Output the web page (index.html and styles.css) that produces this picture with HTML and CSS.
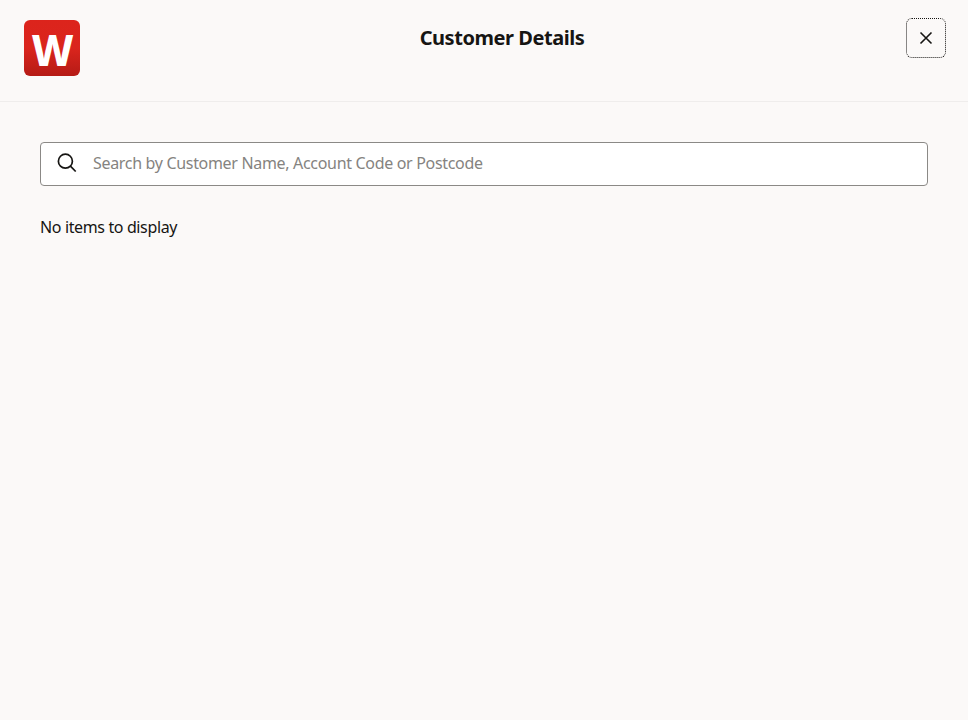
FILE: index.html
```html
<!DOCTYPE html>
<html lang="en">
<head>
<meta charset="utf-8">
<title>Customer Details</title>
<link rel="stylesheet" href="styles.css">
</head>
<body>
<header class="header">
  <div class="logo"><span class="logo-mark">W</span></div>
  <h1 class="title">Customer Details</h1>
  <button class="close" type="button" aria-label="Close">
    <svg viewBox="0 0 14 14"><path d="M1.5 1.5 12.5 12.5M12.5 1.5 1.5 12.5"/></svg>
  </button>
</header>
<main class="content">
  <label class="search">
    <svg class="search-icon" viewBox="0 0 20 20"><circle cx="8.4" cy="8.2" r="7"/><path d="M13.4 13.2 18.7 18.5"/></svg>
    <input class="search-input" type="text" placeholder="Search by Customer Name, Account Code or Postcode">
  </label>
  <p class="empty">No items to display</p>
</main>
</body>
</html>
```

FILE: styles.css
```css
* { box-sizing: border-box; }
body {
  margin: 0;
  min-height: 100vh;
  background: #fbf9f8;
  color: #161513;
  font: 16px/24px "Noto Sans", sans-serif;
}
.header {
  display: flex;
  align-items: flex-start;
  height: 102px;
  padding: 18px 22px 0 24px;
  border-bottom: 1px solid #efedec;
}
.logo {
  display: flex;
  justify-content: center;
  width: 56px;
  height: 56px;
  margin-top: 2px;
  border-radius: 6px;
  background: linear-gradient(#dc241c 0%, #da251d 50%, #b51b16 100%);
}
.logo-mark {
  color: #fff;
  font-size: 43px;
  font-weight: 800;
  line-height: 60px;
  transform: scaleX(0.97);
}
.title {
  flex: 1;
  margin: 6px 0 0;
  padding-left: 18px;
  text-align: center;
  font-size: 20px;
  line-height: 28px;
  font-weight: 700;
  letter-spacing: -0.45px;
}
.close {
  display: flex;
  align-items: center;
  justify-content: center;
  width: 40px;
  height: 40px;
  padding: 0;
  border: 1px dotted #161513;
  border-radius: 6px;
  background: transparent;
}
.close svg { width: 14px; height: 14px; fill: none; stroke: #161513; stroke-width: 1.6; }
.content { padding: 40px; }
.search {
  display: flex;
  align-items: center;
  height: 44px;
  padding: 0 16px;
  gap: 16px;
  border: 1px solid #8b8986;
  border-radius: 4px;
  background: #fff;
}
.search-icon {
  flex: none;
  width: 20px;
  height: 20px;
  margin-top: -2px;
  fill: none;
  stroke: #161513;
  stroke-width: 1.7;
}
.search-input {
  flex: 1;
  height: 24px;
  margin-bottom: 2px;
  padding: 0;
  border: 0;
  outline: 0;
  background: transparent;
  color: #161513;
  font: inherit;
  letter-spacing: -0.32px;
}
.search-input::placeholder { color: #858380; opacity: 1; }
.empty { margin: 29px 0 0; letter-spacing: -0.37px; }
```
